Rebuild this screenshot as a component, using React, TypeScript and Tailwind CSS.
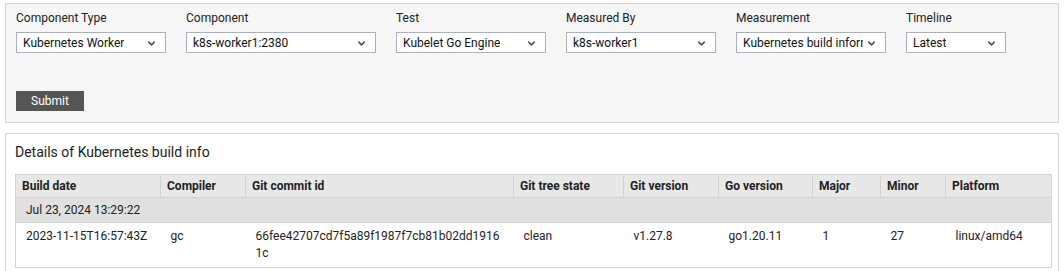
import { ChevronDown } from 'lucide-react';

const font = { fontFamily: 'Roboto, "Noto Sans", sans-serif' };

interface Field {
    label: string;
    value: string;
    width: string;
}

const fields: Field[] = [
    { label: 'Component Type', value: 'Kubernetes Worker', width: 'w-[150px]' },
    { label: 'Component', value: 'k8s-worker1:2380', width: 'w-[190px]' },
    { label: 'Test', value: 'Kubelet Go Engine', width: 'w-[150px]' },
    { label: 'Measured By', value: 'k8s-worker1', width: 'w-[150px]' },
    { label: 'Measurement', value: 'Kubernetes build information', width: 'w-[150px]' },
    { label: 'Timeline', value: 'Latest', width: 'w-[100px]' },
];

const columns = [
    { name: 'Build date', width: 'w-[145px]' },
    { name: 'Compiler', width: 'w-[85px]' },
    { name: 'Git commit id', width: 'w-[268px]' },
    { name: 'Git tree state', width: 'w-[110px]' },
    { name: 'Git version', width: 'w-[95px]' },
    { name: 'Go version', width: 'w-[94px]' },
    { name: 'Major', width: 'w-[68px]' },
    { name: 'Minor', width: 'w-[65px]' },
    { name: 'Platform', width: 'w-[106px]' },
];

const row = [
    '2023-11-15T16:57:43Z',
    'gc',
    '66fee42707cd7f5a89f1987f7cb81b02dd19161c',
    'clean',
    'v1.27.8',
    'go1.20.11',
    '1',
    '27',
    'linux/amd64',
];

export default function App() {
    return (
        <div className="min-h-screen bg-white pt-[3px] px-[5px] text-[#222]" style={font}>
            {/* Filter panel */}
            <div className="border border-[#d3d3d3] bg-[#f6f6f6] pl-[10px] pt-[7px] h-[120px]">
                <div className="flex gap-5">
                    {fields.map(f => (
                        <div key={f.label} className={f.width}>
                            <div className="text-[12px] leading-[14px] h-[21px] text-[#222]">{f.label}</div>
                            <div className="relative flex items-center h-[21px] bg-white border border-[#aab0bb] pl-[6px] pr-[22px]">
                                <span className="text-[12px] whitespace-nowrap overflow-hidden text-[#111]">{f.value}</span>
                                <ChevronDown className="absolute right-[8px] top-[5px] w-[11px] h-[11px] text-[#555]" strokeWidth={3.5} />
                            </div>
                        </div>
                    ))}
                </div>
                <button className="mt-[38px] w-[68px] h-[20px] bg-[#555555] text-white text-[12px] leading-[20px]">
                    Submit
                </button>
            </div>

            {/* Details panel */}
            <div className="mt-[10px] border border-[#d3d3d3] bg-white px-[9px] pt-[8px] pb-[20px]">
                <div className="text-[14px] leading-[20px] text-[#222] mb-[12px]">Details of Kubernetes build info</div>
                <table className="w-[1036px] table-fixed border-collapse border border-[#d3d3d3] text-[12px]">
                    <colgroup>
                        {columns.map(c => (
                            <col key={c.name} className={c.width} />
                        ))}
                    </colgroup>
                    <thead>
                        <tr className="bg-[#e8e8e8] h-[23px]">
                            {columns.map(c => (
                                <th key={c.name} className="border border-[#d3d3d3] px-[6px] text-left font-bold text-[12px] text-[#222]">
                                    {c.name}
                                </th>
                            ))}
                        </tr>
                    </thead>
                    <tbody>
                        <tr className="bg-[#e0e0e0] h-[25px] border-b border-[#d3d3d3]">
                            <td colSpan={9} className="px-[10px] text-[12px]">Jul 23, 2024 13:29:22</td>
                        </tr>
                        <tr className="border-b border-[#d3d3d3]">
                            {row.map((v, i) => (
                                <td key={i} className="px-[10px] pt-[5px] pb-[5px] align-top leading-[17px] break-all">
                                    {v}
                                </td>
                            ))}
                        </tr>
                    </tbody>
                </table>
            </div>
        </div>
    );
}
